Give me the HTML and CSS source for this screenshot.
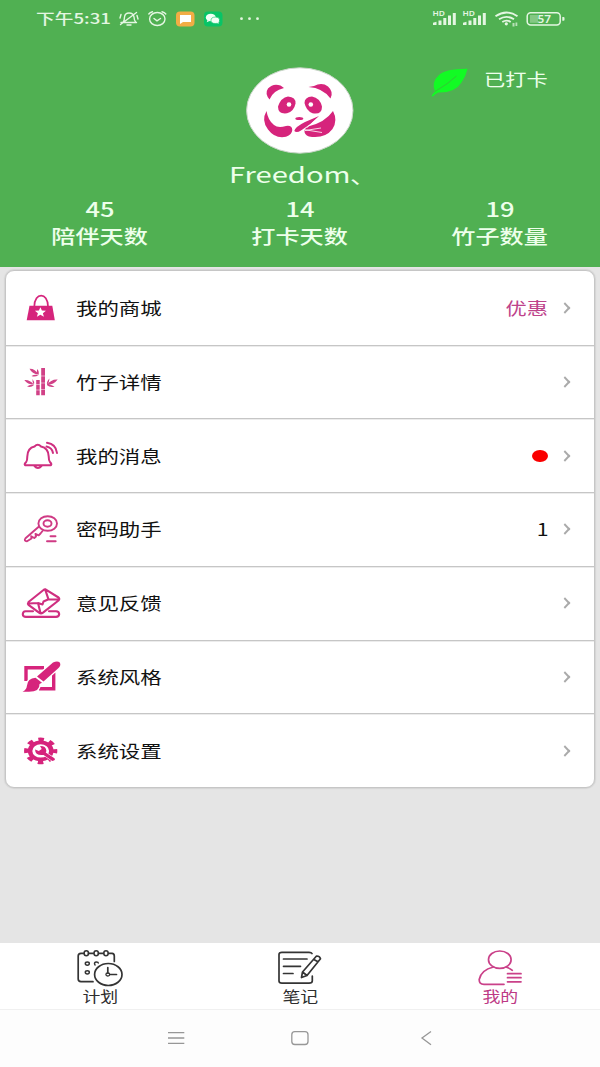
FILE: index.html
```html
<!DOCTYPE html>
<html lang="zh-CN">
<head>
<meta charset="utf-8">
<title>我的</title>
<link rel="stylesheet" href="styles.css">
</head>
<body>
<div class="app">
  <header class="header">
    <div class="status">
      <div class="status-left">
        <span class="clock"><span class="wide">下午5:31</span></span>
        <svg width="144" height="24" viewBox="117 7 144 24" fill="none" stroke="#e4f6e2" stroke-width="1.4" stroke-linecap="round">
          <path d="M121 22.5h15.500M123 22.500Q124.500 20.500 124.500 17Q125 13 129 13Q133.500 13 134 17Q134 20.500 136 22.500M127 25h4M120.500 24.500L136.500 12.500M121 14.500L120 18M137 15.500L138 19"/>
          <ellipse cx="157.300" cy="19" rx="7.700" ry="6.500"/>
          <path d="M154 18.500L157 20.800L160.500 18.500M148.800 14Q150 12.300 152.500 11.800M162 11.800Q164.500 12.300 165.800 14"/>
          <rect x="176" y="11.500" width="18.500" height="15" rx="4" fill="#f2ad45" stroke="none"/>
          <path d="M180 15h11v7h-8l-3 2z" fill="#fff" stroke="none"/>
          <rect x="204" y="11.500" width="18.500" height="15" rx="4" fill="#08c466" stroke="none"/>
          <g stroke="none" fill="#f2fff5"><ellipse cx="210.800" cy="17.500" rx="5" ry="3.800"/><ellipse cx="215.300" cy="20.300" rx="4.300" ry="3.200" stroke="#08c466" stroke-width=".6"/><path d="M207.500 20l-.8 2.200 2.800-1.200zM218 22l1.200 1.500-3-.5z"/></g>
          <g stroke="none" fill="#e4f6e2"><circle cx="241.500" cy="18.700" r="1.400"/><circle cx="249.500" cy="18.700" r="1.400"/><circle cx="257.500" cy="18.700" r="1.400"/></g>
        </svg>
      </div>
      <svg class="signals" width="136" height="24" viewBox="431 7 136 24" fill="#e4f6e2">
        <text x="432.500" y="16.200" font-size="6.800" textLength="12.500" lengthAdjust="spacingAndGlyphs" class="hd">HD</text>
        <path d="M433 25v-2.200l3.500-1v3.200zM438.500 25v-4.500h3V25zM443.300 25v-7h3v7zM448 25v-9.500h3V25zM452.800 25V13h3v12z"/>
        <text x="462.500" y="16.200" font-size="6.800" textLength="12.500" lengthAdjust="spacingAndGlyphs" class="hd">HD</text>
        <path d="M463 25v-2.200l3.500-1v3.200zM468.500 25v-4.500h3V25zM473.300 25v-7h3v7zM478 25v-9.500h3V25zM482.800 25V13h3v12z"/>
        <g fill="none" stroke="#e4f6e2" stroke-width="1.900"><path d="M495.500 16.200Q506.500 8.800 517.500 16.200M499 19.300Q506.500 14.500 514 19.300M502.300 22Q506.500 19.300 510.700 22"/></g>
        <circle cx="506.300" cy="23.800" r="1.600"/>
        <path d="M512.500 23h2v3.500h-2zM515.500 22.500h1.800V26h-1.800z" opacity=".7"/>
        <rect x="527.200" y="12.700" width="33" height="12.300" rx="3.500" fill="none" stroke="#e4f6e2" stroke-width="1.500"/>
        <path d="M562.300 17h1.200q1 0 1 1v1.800q0 1-1 1h-1.200z"/>
        <rect x="530" y="15" width="8" height="7.800" opacity=".35"/>
        <text x="537.500" y="22.600" font-size="10" font-weight="700" textLength="13.500" lengthAdjust="spacingAndGlyphs" class="hd">57</text>
      </svg>
    </div>
    <div class="profile">
      <div class="person">
        <svg width="110" height="88" viewBox="245 66.500 110 88">
          <ellipse cx="299.800" cy="110" rx="53.200" ry="42.700" fill="#fff" stroke="#c9d5c8" stroke-width="1"/>
          <g fill="#d6247c">
            <path d="M269.500 99Q264.500 93 268 88Q273 82.500 280.500 85L284 87.500Q273 90 269.500 99z"/>
            <path d="M308.500 86.500L314 85.500Q322 81.500 328 86Q334 91.500 330.500 98Q323 87.500 308.500 86.500z"/>
            <path d="M278 106Q281 97 288 96Q296 96.500 295.500 103Q294 111 287 112.800Q278 114 278 106z"/>
            <path d="M322 106Q320 97.500 312 96Q304.500 96.500 304.500 102.500Q306 110 312.500 112.800Q322 114.500 322 106z"/>
            <ellipse cx="299.300" cy="118" rx="4" ry="1.600"/>
            <path d="M266.500 110.500Q268 120 274 124.500Q278 128 286 125.500Q292 124.500 292.300 129.500Q292 134 286 136.300Q275 138.500 268 129Q261 120 266.500 110.500z"/>
            <path d="M333 110.500Q338 120 332.500 128.500Q325 138.500 309 136Q304 134 304.500 130Q305 128 308 126Q325 122 333 110.500z"/>
            <path d="M319 115.500L305 121.500Q295 126.500 294.300 130.500Q296.500 132.800 301 130Q311 124 319 115.500z"/>
          </g>
          <circle cx="289" cy="104" r="2.300" fill="#fff"/><circle cx="310.800" cy="104" r="2.300" fill="#fff"/>
          <path d="M304.500 129.200L322 132M305 130L321 127.500M307 127L320 116" stroke="#fff" stroke-width=".8" fill="none"/>
        </svg>
        <span class="name"><span class="wide">Freedom</span><span class="mark">、</span></span>
      </div>
      <div class="badge">
        <svg width="38" height="32" viewBox="430 66 38 32">
          <path d="M431.500 96Q433 93 435 91.500Q431 82 439 75Q446 68.500 467.500 68.700Q466 76 461.500 82.500Q455 93 438 92.500Q435 94 433 96.500z" fill="#12fb24"/>
          <path d="M435 91.500Q448 84 456.500 76" fill="none" stroke="#35c735" stroke-width="1"/>
        </svg>
        <span class="checked"><span class="wide">已打卡</span></span>
      </div>
    </div>
    <div class="stats">
      <div class="stat"><span class="wide">45</span><span class="wide">陪伴天数</span></div>
      <div class="stat"><span class="wide">14</span><span class="wide">打卡天数</span></div>
      <div class="stat"><span class="wide">19</span><span class="wide">竹子数量</span></div>
    </div>
  </header>

  <main class="menu">
    <div class="row">
      <svg class="icon" viewBox="20 290 44 36"><path d="M29.500 305.700H52.300L54.800 320.200H26.700z" fill="#d6247c"/><path d="M34.300 306.500C34.500 292 47.800 292 48 306.500" fill="none" stroke="#d6247c" stroke-width="1.700"/><path d="M40.400 307.300l1.500 3.300 4 .2-3 2.400 1 3.600-3.500-2-3.500 2 1-3.600-3-2.400 4-.2z" fill="#fff"/></svg>
      <span class="label">我的商城</span><span class="value pink">优惠</span><i class="arrow"></i>
    </div>
    <div class="row">
      <svg class="icon" viewBox="20 364 44 36" fill="#d14187"><path d="M41.200 368h3.800v7.800h-3.800zM41.200 376.300h3.800v6.400h-3.800zM41.200 383.200h3.800v6h-3.800zM41.200 389.700h3.800v5.600h-3.800zM36.200 380h3.500v4.300h-3.500zM36.200 384.800h3.500v5h-3.500zM36.200 390.300h3.500v5h-3.500z"/><path d="M29.500 368.800Q35 368.500 38.500 374.500Q32 374 29.500 368.800zM37.200 369Q39.500 371.500 38.500 375Q36.200 373 37.200 369zM31.500 376Q34.500 374 38.500 375Q35 377.500 31.500 376zM24.300 380Q30 379.500 33.700 384.500Q27.500 384.500 24.300 380zM32.500 379Q34.800 381.500 34 385Q32 382 32.500 379zM27 386.500Q30 384.200 34 385Q31 387.800 27 386.500zM57.700 379.500Q51 379 47 385Q54 384.500 57.700 379.500zM49.500 378.500Q46.300 381.500 47 385Q49.500 382 49.500 378.500zM54.500 386.700Q51 384.200 46.800 385Q50 388 54.500 386.700z"/></svg>
      <span class="label">竹子详情</span><i class="arrow"></i>
    </div>
    <div class="row">
      <svg class="icon" viewBox="20 437.500 44 36" fill="none" stroke="#cf2f80" stroke-width="2" stroke-linecap="round" stroke-linejoin="round"><path d="M25 464.700Q24 463.500 26.200 461.500Q27.300 460 27.300 456Q27.500 447.500 34.500 446Q37.800 442.500 41 446Q48.500 447.500 48.700 456Q48.700 460 50 461.500Q52 463.500 51 464.700zM34.500 465.500Q37.800 469.500 41.500 465.500M47 442.300Q56 443.500 57 452.500M46.500 446Q52 447 53 452.500"/></svg>
      <span class="label">我的消息</span><span class="dot"></span><i class="arrow"></i>
    </div>
    <div class="row">
      <svg class="icon" viewBox="20 511.500 44 36" fill="none" stroke="#cf3a84" stroke-width="1.900" stroke-linecap="round" stroke-linejoin="round"><ellipse cx="47.700" cy="524" rx="9.300" ry="7.300"/><ellipse cx="47.500" cy="524" rx="4" ry="3.200"/><path d="M39 527L25.500 538.700Q23.500 541.500 27 541.800L31.500 539L31.200 536.800L34.300 538.500L36 537L35.500 534.500L38.700 535.800L40.500 534L42.500 531.500M50.500 536.800h5M47 541.800h8.700"/></svg>
      <span class="label">密码助手</span><span class="value count">1</span><i class="arrow"></i>
    </div>
    <div class="row">
      <svg class="icon" viewBox="20 585 44 36" fill="none" stroke="#cf2f80" stroke-width="2.100" stroke-linecap="round" stroke-linejoin="round"><path d="M33 611.300H25.500Q22.800 611.500 22.800 614.300Q23 616.800 26 616.900H56Q59 616.800 59.200 614.200Q59 611.500 56 611.300H49"/><path d="M45.500 589.300L58.500 597.500Q60 599 58.500 600.500L43 612.700Q41 614 39 612.700L28.500 604.800Q27.500 603.500 28.500 602L43.500 590Q44.500 589 45.500 589.300zM45.300 589.800L48.500 599.300L58.500 599.500M28.500 603.500L38 603L40.500 613M48.500 599.300L43.500 601.500L42.500 604.500L38 603"/></svg>
      <span class="label">意见反馈</span><i class="arrow"></i>
    </div>
    <div class="row">
      <svg class="icon" viewBox="20 659 44 36"><path d="M26 681V667.700H44M53.700 672.500V688.700H39" fill="none" stroke="#d6247c" stroke-width="3.400"/><g fill="#d6247c" stroke="#fff" stroke-width="2.400" paint-order="stroke" stroke-linejoin="round"><path d="M53 662.500Q57.500 660.300 59.800 662.500Q61.500 665.500 58 668.500L43.500 681.500L37 676.500z"/><path d="M35.500 677.800L42 682.700L39.500 684Q40 691.800 29 691.800H22.500Q26.500 690 27 685.500Q27.500 678.500 35.500 677.800z"/></g></svg>
      <span class="label">系统风格</span><i class="arrow"></i>
    </div>
    <div class="row">
      <svg class="icon" viewBox="20 732.500 44 36"><g transform="translate(40.700 750.400) scale(1.250 1)"><g fill="none" stroke="#d6247c"><circle r="8.500" stroke-width="3.600"/><circle r="11" stroke-width="4.600" stroke-dasharray="4.300 4.339" stroke-dashoffset="2.150"/></g><path d="M-4.500 -1.500L-1.500 0L.8 -1.800L-.5 -4.800Q4 -5 4.500 -.5Q4.500 1 4 1.700L11 7.300Q12.300 9.300 9.300 10L2.300 4Q-4.500 5 -4.500 -1.500z" fill="#d6247c" stroke="#fff" stroke-width="1.200" paint-order="stroke"/></g></svg>
      <span class="label">系统设置</span><i class="arrow"></i>
    </div>
  </main>

  <nav class="tabs">
    <a class="tab">
      <svg width="50" height="38" viewBox="75 949 50 38" fill="none" stroke="#343434" stroke-width="1.700" stroke-linecap="round"><path d="M84 953.300H81Q78.200 953.500 78.200 956V979Q78.200 981.500 81 981.700H93M88.500 953.300h5M98.500 953.300h5M108.500 953.300H112Q114.300 953.500 114.300 956V961.500"/><g stroke-width="1.500"><ellipse cx="86.300" cy="953.300" rx="2.200" ry="2.500"/><ellipse cx="96.200" cy="953.300" rx="2.200" ry="2.500"/><ellipse cx="106" cy="953.300" rx="2.200" ry="2.500"/><ellipse cx="87.300" cy="963.600" rx="2" ry="1.600"/><path d="M95 965Q93.500 962 96.500 962Q98.300 962 98.300 963"/><ellipse cx="87.300" cy="972.300" rx="2" ry="1.600"/></g><ellipse cx="108.300" cy="974.500" rx="13.700" ry="11"/><ellipse cx="107.800" cy="974.500" rx="1.900" ry="1.500" stroke-width="1.300"/><path d="M107.800 967.500v5.500M110 974.500h6.500"/></svg>
      <span class="wide">计划</span>
    </a>
    <a class="tab">
      <svg width="50" height="38" viewBox="275 949 50 38" fill="none" stroke="#343434" stroke-width="1.700" stroke-linecap="round" stroke-linejoin="round"><path d="M312 953.500Q311.500 952.300 309 952.300H282Q279 952.300 279 954.500V981Q279 983.200 282 983.200H309Q312.300 983.200 312.300 981V976M283.500 959H307M283.500 966.300H300.500M283.500 973.500H293"/><path d="M316.500 956Q319.500 955.800 320.500 958.700L307 975.500L301.500 977.500L302.500 972zM313.800 959.500L318 961.800M302.500 972L307 975.500"/></svg>
      <span class="wide">笔记</span>
    </a>
    <a class="tab active">
      <svg width="50" height="38" viewBox="475 949 50 38" fill="none" stroke="#ca4189" stroke-width="1.700" stroke-linecap="round"><ellipse cx="499.800" cy="959.700" rx="11.300" ry="8.700"/><path d="M493.500 967Q481 970 479.200 979.500Q479 984.300 484 984.300H504M506.500 967.300Q510 968.300 512.300 970.300M507.500 973.700h13.500M507.500 977.700h13.500M507.500 981.800h13.500"/></svg>
      <span class="wide">我的</span>
    </a>
  </nav>
  <div class="system">
    <svg width="264" height="20" viewBox="168 1028 264 20" fill="none" stroke="#979797" stroke-width="1.300"><path d="M168 1032.700h16.300M168 1038h16.300M168 1043.300h16.300M431 1031.500L422 1038L431 1044.700"/><rect x="291.800" y="1031.700" width="16.200" height="12.800" rx="3"/></svg>
  </div>
</div>
</body>
</html>
```

FILE: styles.css
```css
* { box-sizing: border-box; }
body { margin: 0; font-family: "Noto Sans CJK SC", "Noto Sans", sans-serif; color: #111; }
svg { display: block; flex: none; }
.app { width: 600px; height: 1067px; display: flex; flex-direction: column; background: #e5e5e5; overflow: hidden; }
.wide { display: inline-block; transform: scaleX(1.25); white-space: nowrap; }
.header { height: 266.500px; flex: none; background: #50b052; color: #edffeb; }
.status { height: 38px; padding: 7px 33px 0 36px; display: flex; justify-content: space-between; }
.status-left { display: flex; }
.clock { width: 81px; font-size: 14.400px; line-height: 22px; font-weight: 500; color: #e4f6e2; }
.clock .wide { transform: scaleX(1.300); transform-origin: left; }
.hd { font-family: "Noto Sans", sans-serif; font-weight: 600; }
.profile { height: 158px; display: grid; grid-template-columns: 200px 200px 200px; }
.person { grid-column: 2; padding-top: 28.500px; display: flex; flex-direction: column; align-items: center; }
.name { width: 142px; font-size: 21px; line-height: 34px; margin-top: 2px; display: flex; }
.name .wide { width: 121px; transform: scaleX(1.390); transform-origin: left; }
.mark { transform: scaleX(1.250); transform-origin: left; }
.badge { display: flex; align-items: flex-start; padding: 28px 0 0 30px; }
.checked { font-size: 17px; line-height: 26px; padding-left: 16px; }
.checked .wide { transform-origin: left; }
.stats { display: grid; grid-template-columns: 1fr 1fr 1fr; font-size: 19.300px; font-weight: 500; line-height: 26.500px; }
.stat { display: flex; flex-direction: column; align-items: center; }
.stat .wide:first-child { transform: scaleX(1.320); }
.menu { margin: 3.500px 5px 0; height: 518px; flex: none; display: grid; grid-template-rows: repeat(7, 1fr); background: #fff; border: 1px solid #c6c6c6; border-radius: 9px; box-shadow: 0 0 1px 1px #d4d4d4; }
.row { display: flex; align-items: center; padding: 0 25px 0 14px; font-size: 17px; }
.row + .row { border-top: 1px solid #c6c6c6; box-shadow: inset 0 1px 0 #ececec; }
.icon { width: 44px; height: 36px; }
.label { margin-left: 12px; margin-right: auto; margin-top: -1px; transform: scaleX(1.26); transform-origin: left; }
.value { transform: scaleX(1.25); transform-origin: right; margin-right: 13px; margin-top: -1px; }
.pink { color: #be438b; }
.dot { width: 16px; height: 12.500px; border-radius: 50%; background: #fa0000; margin-right: 13px; }
.arrow { width: 8px; height: 8px; border: solid #aaa; border-width: 2px 2px 0 0; transform: scaleX(.95) rotate(45deg); }
.tabs { margin-top: auto; height: 67px; flex: none; display: grid; grid-template-columns: 1fr 1fr 1fr; background: #fff; border-bottom: 1px solid #f0f0f0; }
.tab { display: flex; flex-direction: column; align-items: center; padding-top: 6px; font-size: 14.300px; line-height: 17px; color: #2e2e2e; }
.active { color: #bd3985; }
.system { height: 57px; flex: none; display: flex; justify-content: center; padding-top: 18px; background: #fdfdfd; }
```
